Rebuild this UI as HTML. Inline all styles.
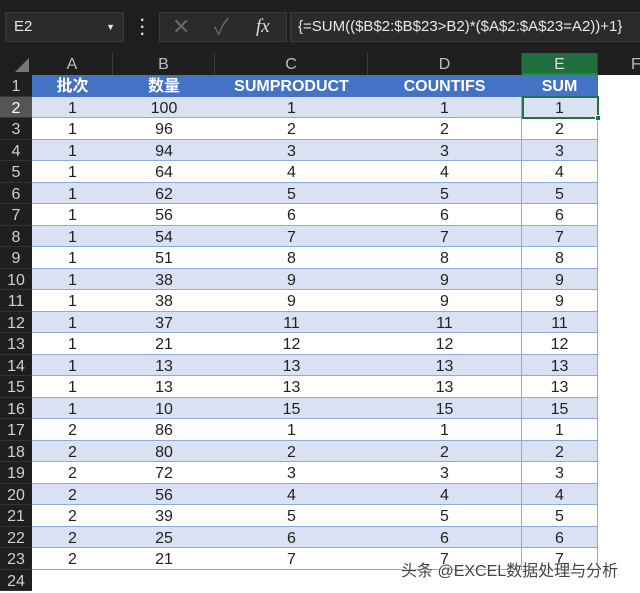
<!DOCTYPE html>
<html><head><meta charset="utf-8"><style>
*{margin:0;padding:0;box-sizing:border-box}
body{width:640px;height:590px;overflow:hidden;background:#fff;font-family:"Liberation Sans","Noto Sans CJK SC",sans-serif;position:relative}
.top{position:absolute;left:0;top:0;width:640px;height:53px;background:#1f1f1f}
.box{position:absolute;background:#2b2b2b;border:1px solid #3a3a3a;color:#e8e8e8}
.ch{position:absolute;top:53px;height:22px;background:#1f1f1f;color:#bdbdbd;font-size:16px;text-align:center;line-height:24px;border-right:1px solid #3a3a3a}
.rh{position:absolute;left:0;width:32px;background:#1f1f1f;color:#d0d0d0;font-size:16px;text-align:center;border-bottom:1px solid #333}
.row{position:absolute;left:32px;width:566px;display:flex;font-size:16px;color:#222;border-bottom:1px solid #8ea9db}
.row div{text-align:center;height:100%}
.c1{width:81px}.c2{width:102px}.c3{width:153px}.c4{width:154px;border-right:1px solid #8ea9db}.c5{width:76px;border-right:1px solid #8ea9db}
.b{background:#d9e1f2}
.h{background:#4472c4;color:#fff;font-weight:bold}
</style></head><body>
<div class="top"></div>
<div class="box" style="left:5px;top:12px;width:119px;height:30px;font-size:15px;line-height:28px;padding-left:8px">E2<span style="position:absolute;right:8px;top:0;font-size:9px">▼</span></div>
<div style="position:absolute;left:140px;top:17px;color:#ddd;font-size:16px;font-weight:bold;line-height:7px">·<br>·<br>·</div>
<div class="box" style="left:159px;top:12px;width:128px;height:30px;color:#666;font-size:22px;line-height:28px"><span style="position:absolute;left:12px">✕</span><span style="position:absolute;left:54px">✓</span><span style="position:absolute;left:96px;color:#ddd;font-family:'Liberation Serif',serif;font-style:italic;font-size:19px">fx</span></div>
<div class="box" style="left:290px;top:12px;width:352px;height:30px;font-size:15px;line-height:28px;padding-left:7px">{=SUM(($B$2:$B$23&gt;B2)*($A$2:$A$23=A2))+1}</div>
<div class="ch" style="left:0;width:32px;border:none"><span style="position:absolute;right:3px;bottom:3px;width:0;height:0;border-left:14px solid transparent;border-bottom:14px solid #777"></span></div>
<div class="ch" style="left:32px;width:81px">A</div>
<div class="ch" style="left:113px;width:102px">B</div>
<div class="ch" style="left:215px;width:153px">C</div>
<div class="ch" style="left:368px;width:154px">D</div>
<div class="ch" style="left:522px;width:76px;background:#1e6e3e;color:#ddd;border-bottom:2px solid #1e8e3e">E</div>
<div class="ch" style="left:598px;width:60px;text-align:left;padding-left:33px">F</div>
<div id="g"></div>
<div style="position:absolute;left:522px;top:96px;width:77px;height:23px;border:2px solid #217346"></div>
<div style="position:absolute;left:595px;top:115px;width:6px;height:6px;background:#217346;border:1px solid #fff"></div>
<div style="position:absolute;left:401px;top:557px;font-size:16px;color:#444;text-shadow:0 0 2px #fff,0 0 1px #fff">头条 @EXCEL数据处理与分析</div>
<script>
var B=[100,96,94,64,62,56,54,51,38,38,37,21,13,13,10,86,80,72,56,39,25,21],C=[1,2,3,4,5,6,7,8,9,9,11,12,13,13,15,1,2,3,4,5,6,7],h='';
for(var n=1;n<=24;n++){var t=75+(n-1)*21.5;
h+='<div class="rh" style="top:'+t+'px;height:21.5px;line-height:23px;'+(n==2?'background:#555;color:#fff;':'')+'">'+n+'</div>';
if(n==1)h+='<div class="row h" style="top:'+t+'px;height:21.5px;line-height:23px;border-bottom:none"><div class="c1">批次</div><div class="c2">数量</div><div class="c3">SUMPRODUCT</div><div class="c4" style="border-right-color:#4472c4">COUNTIFS</div><div class="c5" style="border-right-color:#4472c4">SUM</div></div>';
else if(n<=23){var i=n-2;h+='<div class="row'+(n%2==0?' b':'')+'" style="top:'+t+'px;height:21.5px;line-height:23px"><div class="c1">'+(i<15?1:2)+'</div><div class="c2">'+B[i]+'</div><div class="c3">'+C[i]+'</div><div class="c4">'+C[i]+'</div><div class="c5">'+C[i]+'</div></div>';}}
document.getElementById('g').innerHTML=h;
</script>
</body></html>
